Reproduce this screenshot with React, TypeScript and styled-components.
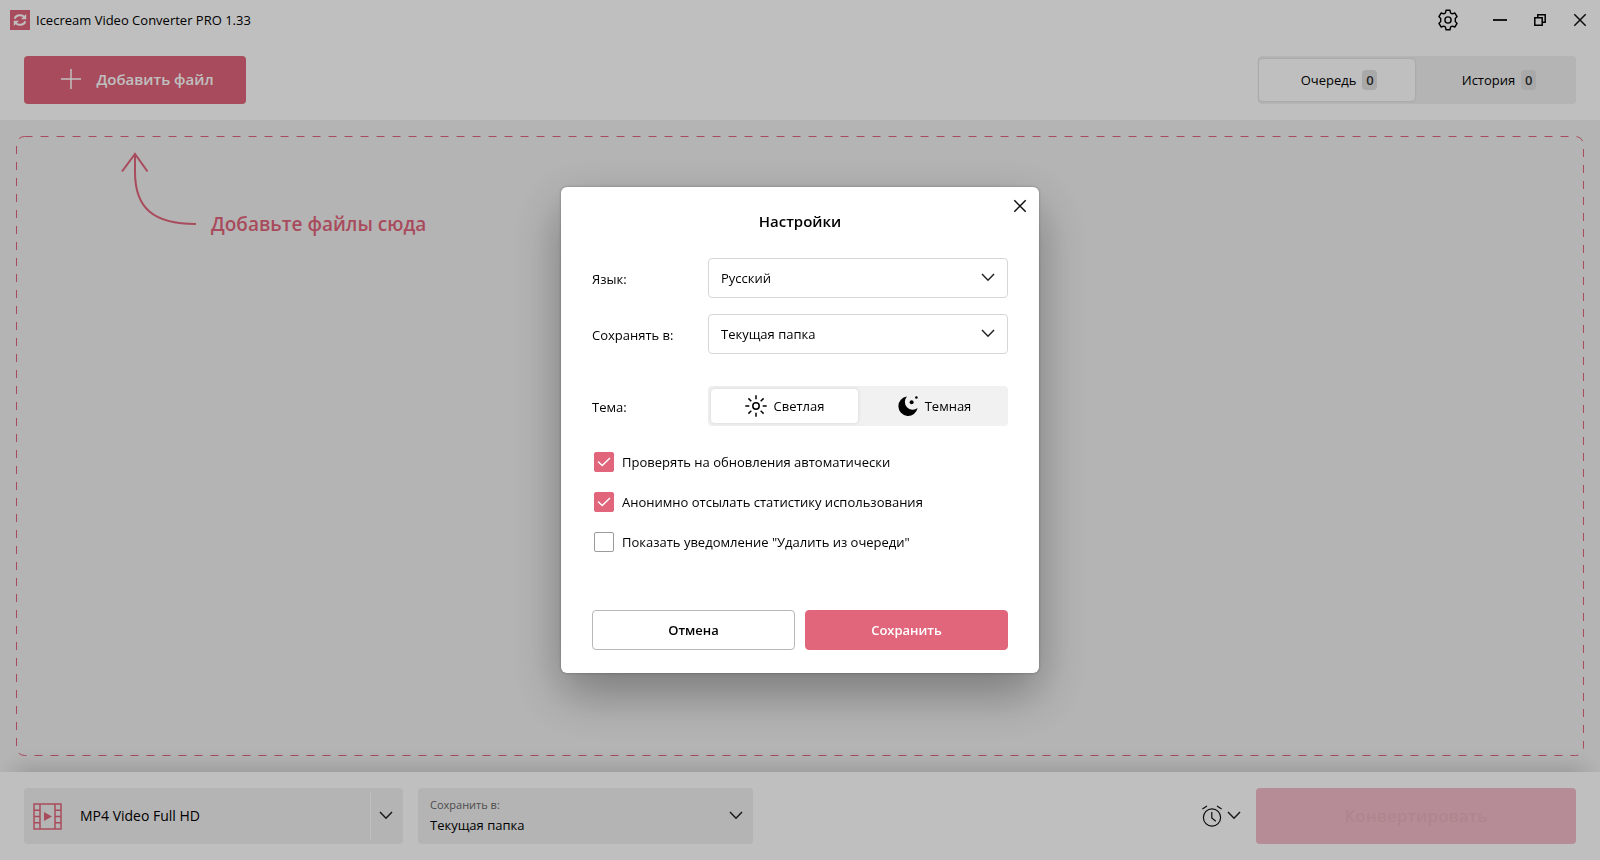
import React, { useState } from "react";
import styled, { createGlobalStyle, css } from "styled-components";

const color = {
  accent: "#e1657b",
  ink: "#000",
  surface: "#fff",
  muted: "#f1f1f1",
  line: "#d6d6d6",
};

const Global = createGlobalStyle`
  *, *::before, *::after { box-sizing: border-box; }
  body { margin: 0; background: ${color.muted}; }
  body, button, select, input {
    font-family: "Open Sans", "Noto Sans", sans-serif;
    font-size: 13px;
    line-height: 20px;
    color: ${color.ink};
  }
  button { border: 0; padding: 0; background: none; cursor: pointer; }
  svg { display: block; flex: none; }
`;

const Window = styled.div`
  display: flex;
  flex-direction: column;
  min-height: 100vh;
`;

const TitleBar = styled.header`
  display: flex;
  align-items: center;
  height: 40px;
  padding: 0 12px 0 10px;
  gap: 6px;
  background: ${color.surface};
`;

const AppName = styled.h1`
  flex: 1;
  margin: 0;
  font-size: 13px;
  line-height: 20px;
  font-weight: 400;
`;

const WindowControls = styled.div`
  display: flex;
  align-items: center;
  gap: 24px;
`;

const IconButton = styled.button<{ $wide?: boolean }>`
  display: grid;
  place-items: center;
  width: 16px;
  height: 24px;
  ${(p) => p.$wide && css`width: 24px; margin-right: 8px;`}
`;

const Toolbar = styled.div`
  display: flex;
  align-items: center;
  justify-content: space-between;
  height: 80px;
  padding: 0 24px;
  background: ${color.surface};
`;

const AddButton = styled.button`
  display: flex;
  align-items: center;
  justify-content: center;
  gap: 15px;
  width: 222px;
  height: 48px;
  padding: 0 0 2px 5px;
  border-radius: 4px;
  background: ${color.accent};
  color: #fff;
  font-size: 15px;
  font-weight: 600;
`;

const Tabs = styled.div`
  display: flex;
  width: 318px;
  height: 48px;
  padding: 3px 1px;
  gap: 4px;
  border-radius: 4px;
  background: ${color.muted};
`;

const Tab = styled.button<{ $active?: boolean }>`
  display: flex;
  flex: 1;
  align-items: center;
  justify-content: center;
  gap: 6px;
  padding-left: 4px;
  border-radius: 4px;
  ${(p) => p.$active && css`
    background: ${color.surface};
    box-shadow: 0 0 3px rgba(0, 0, 0, 0.15);
  `}
`;

const Count = styled.span`
  width: 15px;
  border-radius: 4px;
  background: #e2e2e2;
  color: #333;
  font-weight: 600;
`;

const DropArea = styled.main`
  position: relative;
  flex: 1;
  margin: 16px;
`;

const DashedFrame = styled.svg`
  position: absolute;
  inset: 0;
  width: 100%;
  height: 100%;
  overflow: visible;

  rect {
    width: calc(100% - 1px);
    height: calc(100% - 1px);
  }
`;

const DropHint = styled.div`
  display: flex;
  align-items: flex-end;
  gap: 14px;
  padding: 16px 0 0 105px;
  color: ${color.accent};
  font-size: 19px;
  line-height: 28px;
  font-weight: 600;

  svg { margin-bottom: 12px; }
`;

const Footer = styled.footer`
  position: relative;
  display: flex;
  align-items: center;
  height: 88px;
  padding: 0 24px;
  background: ${color.surface};
  box-shadow: 0 -16px 24px -14px rgba(0, 0, 0, 0.2);
`;

const FormatPicker = styled.div`
  display: flex;
  width: 379px;
  height: 56px;
  margin-right: 15px;
  border-radius: 4px;
  background: ${color.muted};
`;

const FormatButton = styled.button`
  display: flex;
  flex: 1;
  align-items: center;
  gap: 18px;
  padding-left: 9px;
  font-size: 14px;
  text-align: left;
`;

const FormatArrow = styled.button`
  display: grid;
  place-items: center;
  width: 33px;
  padding-right: 2px;
  margin: 4px 0;
  border-left: 1px solid #fff;
`;

const FolderPicker = styled.label`
  position: relative;
  display: flex;
  flex-direction: column;
  justify-content: center;
  width: 335px;
  height: 56px;
  padding: 0 12px 2px;
  border-radius: 4px;
  background: ${color.muted};
  color: #666;
  font-size: 11px;
`;

const PlainSelect = styled.select`
  appearance: none;
  width: 100%;
  padding: 0;
  border: 0;
  background: none;
`;

const SelectArrow = styled.span<{ $right: number }>`
  position: absolute;
  top: 0;
  bottom: 0;
  right: ${(p) => p.$right}px;
  display: grid;
  place-items: center;
  pointer-events: none;
`;

const TimerButton = styled.button`
  display: flex;
  align-items: center;
  gap: 5px;
  height: 40px;
  margin: 0 15px 0 auto;
`;

const ConvertButton = styled.button`
  width: 320px;
  height: 56px;
  border-radius: 4px;
  background: #f3bdc8;
  color: #ecb2be;
  font-size: 17px;
  font-weight: 600;
`;

const Backdrop = styled.div`
  position: fixed;
  inset: 0;
  display: grid;
  place-items: center;
  background: rgba(0, 0, 0, 0.25);
`;

const Dialog = styled.form`
  position: relative;
  display: flex;
  flex-direction: column;
  width: 478px;
  padding: 24px 31px 23px;
  border-radius: 6px;
  background: ${color.surface};
  box-shadow: 0 20px 50px rgba(0, 0, 0, 0.34), 0 0 3px rgba(0, 0, 0, 0.3);
`;

const CloseButton = styled.button`
  position: absolute;
  top: 7px;
  right: 7px;
  display: grid;
  place-items: center;
  width: 24px;
  height: 24px;
`;

const DialogTitle = styled.h2`
  margin: 0 0 27px;
  font-size: 15px;
  line-height: 20px;
  font-weight: 600;
  text-align: center;
`;

const Fields = styled.div`
  display: flex;
  flex-direction: column;
  gap: 16px;
`;

const Field = styled.div`
  display: grid;
  grid-template-columns: 116px 1fr;
  align-items: center;
  height: 40px;
`;

const FieldLabel = styled.label`
  padding-top: 2px;
`;

const ThemeField = styled(Field)`
  margin-top: 16px;
`;

const SelectBox = styled.div`
  position: relative;
`;

const BoxedSelect = styled(PlainSelect)`
  display: block;
  height: 40px;
  padding: 0 12px;
  border: 1px solid ${color.line};
  border-radius: 4px;
  background: ${color.surface};
`;

const ThemeSwitch = styled.div`
  display: flex;
  gap: 3px;
  height: 40px;
  padding: 3px 0 3px 3px;
  border-radius: 4px;
  background: ${color.muted};
`;

const HiddenRadio = styled.input`
  position: absolute;
  opacity: 0;
  pointer-events: none;
`;

const ThemeOption = styled.label<{ $active?: boolean }>`
  display: flex;
  flex: 1;
  align-items: center;
  justify-content: center;
  gap: 7px;
  border-radius: 4px;
  cursor: pointer;
  ${(p) => p.$active && css`
    background: ${color.surface};
    box-shadow: 0 0 4px rgba(0, 0, 0, 0.12);
  `}
`;

const Checks = styled.div`
  display: flex;
  flex-direction: column;
  gap: 20px;
  padding: 26px 2px 58px;
`;

const Check = styled.label`
  position: relative;
  display: flex;
  align-items: center;
  gap: 8px;

  input {
    appearance: none;
    width: 20px;
    height: 20px;
    margin: 0;
    border: 1px solid #9a9a9a;
    border-radius: 2px;
  }
  input:checked {
    border-color: ${color.accent};
    background: ${color.accent};
  }
  svg {
    position: absolute;
    left: 3px;
    top: 5px;
    pointer-events: none;
  }
  input:not(:checked) + svg { display: none; }
`;

const Actions = styled.div`
  display: flex;
  gap: 10px;
`;

const ActionButton = styled.button<{ $primary?: boolean }>`
  flex: 1;
  height: 40px;
  border: 1px solid ${(p) => (p.$primary ? color.accent : "#b8b8b8")};
  border-radius: 4px;
  background: ${(p) => (p.$primary ? color.accent : color.surface)};
  color: ${(p) => (p.$primary ? "#fff" : color.ink)};
  font-weight: 600;
`;

const Chevron = () => (
  <svg width="14" height="10" viewBox="0 0 14 10" fill="none" stroke="#222" strokeWidth="1.5">
    <path d="M1 1l6 6.2L13 1" />
  </svg>
);

const Cross = () => (
  <svg width="14" height="14" viewBox="0 0 14 14" fill="none" stroke="#111" strokeWidth="1.5">
    <path d="M1.3 1.3l11.4 11.4M12.7 1.3L1.3 12.7" />
  </svg>
);

const Logo = () => (
  <svg width="20" height="20" viewBox="0 0 20 20">
    <path d="M0 0h20v20H0z" fill={color.accent} />
    <g fill="none" stroke="#fff" strokeWidth="2">
      <path d="M4.6 8.6C6 5 11.5 3.8 14.6 7.2" />
      <path d="M15.4 11.4C14 15 8.5 16.2 5.4 12.8" />
    </g>
    <path d="M16.2 4v5.2H11zM3.8 16v-5.2H9z" fill="#fff" />
  </svg>
);

const Gear = () => (
  <svg width="22" height="22" viewBox="0 0 22 22" fill="none" stroke="#000" strokeWidth="1.4" strokeLinejoin="round">
    <path d="M8.5 3.9L9 1.200h4l.5 2.700 1.700 1 2.600-.9 2.300 3.600-1.800 1.900v3l1.800 1.900-2.300 3.600-2.600-.9-1.700 1-.5 2.700H9l-.5-2.700-1.700-1-2.600.9-2.300-3.600 1.800-1.900v-3L1.900 7.600 4.200 4l2.600.9z" />
    <circle cx="11" cy="11" r="3.1" />
  </svg>
);

const Minimize = () => (
  <svg width="14" height="14" viewBox="0 0 14 14">
    <path d="M0 6h14v2H0z" fill="#222" />
  </svg>
);

const Restore = () => (
  <svg width="12" height="12" viewBox="0 0 12 12" fill="none" stroke="#000" strokeWidth="1.5">
    <path d="M.8 3.8h7.400v7.400H.8zM3.800 3.800v-3h7.400v7.400h-3" />
  </svg>
);

const Plus = () => (
  <svg width="20" height="20" viewBox="0 0 20 20" fill="none" stroke="#fff" strokeWidth="1.5">
    <path d="M10 0v20M0 10h20" />
  </svg>
);

const CurvedArrow = () => (
  <svg width="76" height="74" viewBox="0 0 76 74" fill="none" stroke={color.accent} strokeWidth="2">
    <path d="M1 19.5L14 2l12.500 17.500M14 2v18c0 36 18 52 61 52" />
  </svg>
);

const Film = () => (
  <svg width="29" height="27" viewBox="0 0 29 27" fill="none" stroke={color.accent} strokeWidth="1.5">
    <path d="M1 1h27v25H1zM7 1v25M22 1v25M1 7.200h6M1 13.500h6M1 19.800h6M22 7.200h6M22 13.500h6M22 19.800h6" />
    <path d="M11 9l8 4.500-8 4.500z" fill={color.accent} stroke="none" />
  </svg>
);

const Alarm = () => (
  <svg width="20" height="22" viewBox="0 0 20 22" fill="none" stroke="#111" strokeWidth="1.2">
    <circle cx="10" cy="12.5" r="8.6" />
    <path d="M9.800 7v6l4 3.200M.4 4L5 1M15 1l4.600 3" />
  </svg>
);

const Sun = () => (
  <svg width="22" height="22" viewBox="0 0 22 22" fill="none" stroke="#000" strokeWidth="1.5">
    <circle cx="11" cy="11" r="3.2" />
    <path d="M11 .3v4M11 17.700v4M.3 11h4M17.700 11h4M3.400 3.400l2.900 2.900M15.700 15.700l2.900 2.900M3.400 18.600l2.900-2.900M15.700 6.300l2.900-2.900" />
  </svg>
);

const Moon = () => (
  <svg width="20" height="20" viewBox="0 0 20 20">
    <path d="M9 .6A9.700 9.700 0 1 0 19.600 12 7.800 7.800 0 0 1 9 .6z" />
    <circle cx="13.6" cy="6.2" r="2" />
    <circle cx="18.400" cy="1.500" r="1.300" />
  </svg>
);

const Tick = () => (
  <svg width="14" height="10" viewBox="0 0 14 10" fill="none" stroke="#fff" strokeWidth="1.5">
    <path d="M1 4.5l4.200 4L13 1" />
  </svg>
);

function SettingsDialog({ onClose }: { onClose: () => void }) {
  const [theme, setTheme] = useState("light");
  return (
    <Backdrop>
      <Dialog role="dialog" aria-labelledby="settings-title" onSubmit={(e) => { e.preventDefault(); onClose(); }}>
        <CloseButton type="button" aria-label="Закрыть" onClick={onClose}><Cross /></CloseButton>
        <DialogTitle id="settings-title">Настройки</DialogTitle>
        <Fields>
          <Field>
            <FieldLabel htmlFor="language">Язык:</FieldLabel>
            <SelectBox>
              <BoxedSelect id="language"><option>Русский</option></BoxedSelect>
              <SelectArrow $right={13}><Chevron /></SelectArrow>
            </SelectBox>
          </Field>
          <Field>
            <FieldLabel htmlFor="folder">Сохранять в:</FieldLabel>
            <SelectBox>
              <BoxedSelect id="folder"><option>Текущая папка</option></BoxedSelect>
              <SelectArrow $right={13}><Chevron /></SelectArrow>
            </SelectBox>
          </Field>
          <ThemeField>
            <FieldLabel as="span" id="theme-label">Тема:</FieldLabel>
            <ThemeSwitch role="radiogroup" aria-labelledby="theme-label">
              <ThemeOption $active={theme === "light"}>
                <HiddenRadio type="radio" name="theme" checked={theme === "light"} onChange={() => setTheme("light")} />
                <Sun />Светлая
              </ThemeOption>
              <ThemeOption $active={theme === "dark"}>
                <HiddenRadio type="radio" name="theme" checked={theme === "dark"} onChange={() => setTheme("dark")} />
                <Moon />Темная
              </ThemeOption>
            </ThemeSwitch>
          </ThemeField>
        </Fields>
        <Checks>
          <Check><input type="checkbox" defaultChecked /><Tick />Проверять на обновления автоматически</Check>
          <Check><input type="checkbox" defaultChecked /><Tick />Анонимно отсылать статистику использования</Check>
          <Check><input type="checkbox" /><Tick />Показать уведомление "Удалить из очереди"</Check>
        </Checks>
        <Actions>
          <ActionButton type="button" onClick={onClose}>Отмена</ActionButton>
          <ActionButton type="submit" $primary>Сохранить</ActionButton>
        </Actions>
      </Dialog>
    </Backdrop>
  );
}

export default function App() {
  const [tab, setTab] = useState("queue");
  const [settingsOpen, setSettingsOpen] = useState(true);
  return (
    <>
      <Global />
      <Window>
        <TitleBar>
          <Logo />
          <AppName>Icecream Video Converter PRO 1.33</AppName>
          <WindowControls>
            <IconButton $wide aria-label="Настройки" onClick={() => setSettingsOpen(true)}><Gear /></IconButton>
            <IconButton aria-label="Свернуть"><Minimize /></IconButton>
            <IconButton aria-label="Восстановить"><Restore /></IconButton>
            <IconButton aria-label="Закрыть"><Cross /></IconButton>
          </WindowControls>
        </TitleBar>
        <Toolbar>
          <AddButton><Plus />Добавить файл</AddButton>
          <Tabs role="tablist">
            <Tab role="tab" aria-selected={tab === "queue"} $active={tab === "queue"} onClick={() => setTab("queue")}>
              Очередь<Count>0</Count>
            </Tab>
            <Tab role="tab" aria-selected={tab === "history"} $active={tab === "history"} onClick={() => setTab("history")}>
              История<Count>0</Count>
            </Tab>
          </Tabs>
        </Toolbar>
        <DropArea>
          <DashedFrame aria-hidden="true">
            <rect x="0.5" y="0.5" rx="8" fill="none" stroke={color.accent} strokeDasharray="8 8" />
          </DashedFrame>
          <DropHint><CurvedArrow />Добавьте файлы сюда</DropHint>
        </DropArea>
        <Footer>
          <FormatPicker>
            <FormatButton><Film />MP4 Video Full HD</FormatButton>
            <FormatArrow aria-label="Выбрать формат"><Chevron /></FormatArrow>
          </FormatPicker>
          <FolderPicker>
            Сохранить в:
            <PlainSelect><option>Текущая папка</option></PlainSelect>
            <SelectArrow $right={10}><Chevron /></SelectArrow>
          </FolderPicker>
          <TimerButton aria-label="Таймер"><Alarm /><Chevron /></TimerButton>
          <ConvertButton disabled>Конвертировать</ConvertButton>
        </Footer>
      </Window>
      {settingsOpen && <SettingsDialog onClose={() => setSettingsOpen(false)} />}
    </>
  );
}
